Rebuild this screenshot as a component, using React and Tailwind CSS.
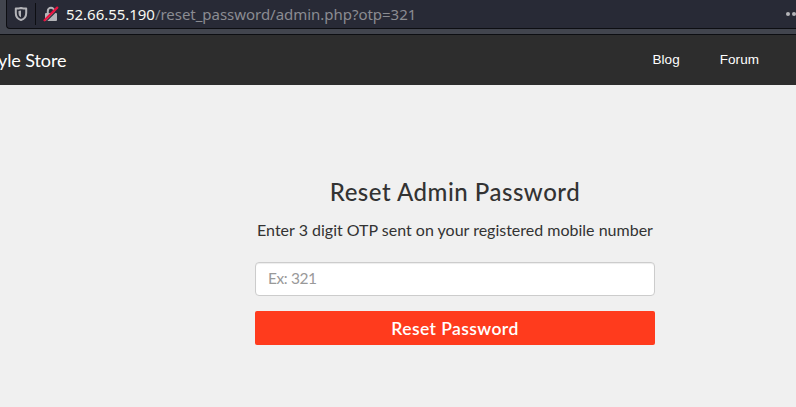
function ShieldIcon() {
  return (
    <svg className="w-[14px] h-[16px] shrink-0" viewBox="0 0 14 16" fill="none">
      <path d="M7 2 C9 2.5 11 2.6 12.2 2.6 V7 C12.2 10.5 10.5 13 7 14 C3.5 13 1.8 10.5 1.8 7 V2.6 C3 2.6 5 2.5 7 2Z" stroke="#b4b4b8" strokeWidth="2" strokeLinejoin="round" />
      <path d="M7 4.5 V11.2 C5.2 10.3 4.5 8.8 4.5 7 V5 Z" fill="#b4b4b8" />
    </svg>
  );
}

function InsecureLockIcon() {
  return (
    <svg className="w-[16px] h-[16px] shrink-0" viewBox="0 0 16 16" fill="none">
      <path d="M4.8 8 V5 a3.2 3.2 0 0 1 6.4 0 V8" stroke="#b4b4b8" strokeWidth="2" />
      <rect x="2" y="7" width="12" height="8" rx="1" fill="#b4b4b8" />
      <path d="M2.6 15.8 L15.4 3" stroke="#282a36" strokeWidth="1.2" />
      <path d="M1.6 14.2 L14.2 1.6" stroke="#e9123f" strokeWidth="2.3" strokeLinecap="round" />
    </svg>
  );
}

export default function App() {
  return (
    <div className="w-[796px] h-[407px] overflow-hidden bg-[#f0f0f0] font-['Lato',sans-serif] text-[#333]">
      <div className="h-[35px] bg-[#42454e] border-b border-[#0d0e12] pl-[6px]">
        <div className="h-[29px] bg-[#282a36] border-l border-b border-[#0d0e12] rounded-bl-[4px] flex items-center pl-[7px]">
          <ShieldIcon />
          <div className="w-px h-[22px] bg-[#0d0e12] mx-[7px]" />
          <InsecureLockIcon />
          <div className="ml-[7px] whitespace-nowrap font-['Noto_Sans',sans-serif] text-[15px] tracking-[-0.03px] leading-[28px] text-[#8b8c92]">
            <span className="text-[#f8f8f2]">52.66.55.190</span>/reset_password/admin.php?otp=321
          </div>
          <div className="flex gap-[2px] ml-auto -mr-[0px]">
            <span className="size-1 rounded-full bg-[#b4b4b8]" />
            <span className="size-1 rounded-full bg-[#b4b4b8]" />
          </div>
        </div>
      </div>
      <nav className="h-[50px] bg-[#2d2d2d] text-white flex items-center justify-between pr-[37px]">
        <span className="-ml-[2px] text-[18px] tracking-[-0.1px] whitespace-nowrap">yle Store</span>
        <div className="flex gap-[40px] text-[13.5px] tracking-[0.05px] font-['Liberation_Sans',sans-serif]">
          <a>Blog</a>
          <a>Forum</a>
        </div>
      </nav>
      <main className="ml-[255px] w-[400px] pt-[91px] flex flex-col items-center">
        <h1 className="text-[24px] leading-[32px] tracking-[0.52px] font-medium whitespace-nowrap">Reset Admin Password</h1>
        <p className="mt-[11px] text-[16px] leading-[22px] whitespace-nowrap">Enter 3 digit OTP sent on your registered mobile number</p>
        <input
          className="mt-[21px] h-[34px] w-full rounded-[4px] border border-[#ccc] bg-white px-[12px] pb-[2px] text-[15.5px] tracking-[-0.4px] shadow-[inset_0_1px_1px_rgba(0,0,0,0.075)] placeholder:text-[#999]"
          placeholder="Ex: 321"
        />
        <button className="mt-[15px] h-[34px] w-full rounded-[2px] bg-[#ff3b1d] pt-[2px] text-[17.5px] tracking-[0.4px] font-semibold text-white">Reset Password</button>
      </main>
    </div>
  );
}
